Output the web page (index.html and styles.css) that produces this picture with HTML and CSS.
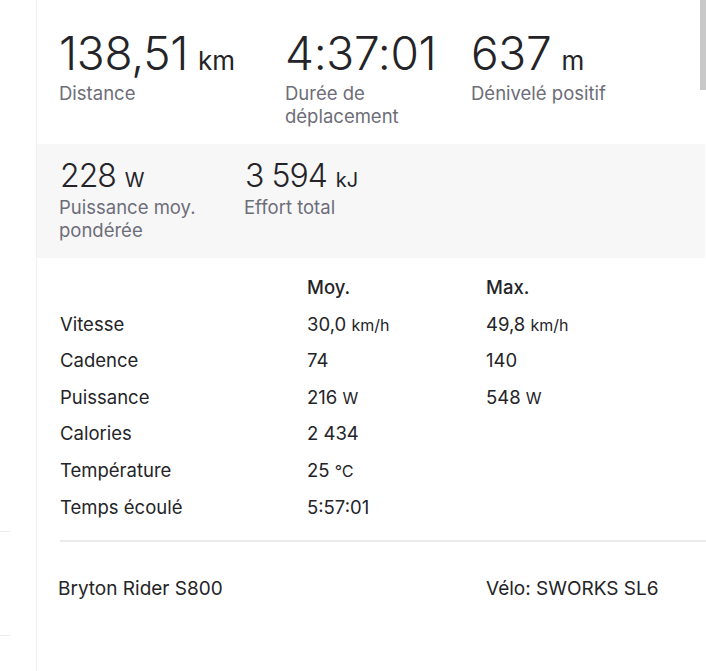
FILE: index.html
```html
<!DOCTYPE html>
<html lang="fr">
<head>
<meta charset="utf-8">
<title>Activité</title>
<link rel="stylesheet" href="styles.css">
</head>
<body>
<div class="page">
  <aside class="side">
    <span class="tick tick-a"></span>
    <span class="tick tick-b"></span>
  </aside>
  <main class="main">
    <section class="stats primary">
      <div class="stat s1">
        <div class="val">138,51<span class="unit">km</span></div>
        <div class="lbl">Distance</div>
      </div>
      <div class="stat s2">
        <div class="val">4:37:01</div>
        <div class="lbl">Durée de déplacement</div>
      </div>
      <div class="stat s3">
        <div class="val">637<span class="unit">m</span></div>
        <div class="lbl">Dénivelé positif</div>
      </div>
    </section>
    <section class="stats secondary">
      <div class="stat t1">
        <div class="val">228<span class="unit">W</span></div>
        <div class="lbl">Puissance moy. pondérée</div>
      </div>
      <div class="stat t2">
        <div class="val">3 594<span class="unit">kJ</span></div>
        <div class="lbl">Effort total</div>
      </div>
    </section>
    <section class="table">
      <div class="cell head"></div><div class="cell head">Moy.</div><div class="cell head">Max.</div>
      <div class="cell">Vitesse</div><div class="cell">30,0 <span class="u">km/h</span></div><div class="cell">49,8 <span class="u">km/h</span></div>
      <div class="cell">Cadence</div><div class="cell">74</div><div class="cell">140</div>
      <div class="cell">Puissance</div><div class="cell">216 <span class="u">W</span></div><div class="cell">548 <span class="u">W</span></div>
      <div class="cell">Calories</div><div class="cell">2 434</div><div class="cell"></div>
      <div class="cell">Température</div><div class="cell">25 <span class="u">℃</span></div><div class="cell"></div>
      <div class="cell">Temps écoulé</div><div class="cell">5:57:01</div><div class="cell"></div>
    </section>
    <hr class="divider">
    <section class="device">
      <div class="dev">Bryton Rider S800</div>
      <div class="bike">Vélo: SWORKS SL6</div>
    </section>
  </main>
  <div class="scroll-thumb"></div>
</div>
</body>
</html>
```
FILE: styles.css
```css
* { box-sizing: border-box; }
html, body { margin: 0; padding: 0; background: #fff; }
body {
  font-family: "Inter", "Noto Sans", sans-serif;
  color: #242428;
  width: 706px;
  height: 671px;
  overflow: hidden;
}
.page {
  position: relative;
  display: flex;
  height: 671px;
}
.side {
  position: relative;
  width: 37px;
  flex: none;
  border-right: 1px solid #efeff0;
}
.tick {
  position: absolute;
  left: 0;
  width: 10px;
  height: 1px;
  background: #ececec;
}
.tick-a { top: 531px; }
.tick-b { top: 635px; }
.main {
  flex: 1;
  min-width: 0;
}
.stats {
  display: flex;
  padding-left: 22px;
}
.primary {
  padding-top: 25px;
  height: 144px;
}
.secondary {
  background: #f7f7f8;
  height: 114px;
  padding-top: 11px;
  margin-right: 1px;
}
.stat .val {
  font-weight: 300;
  white-space: nowrap;
}
.primary .val { font-size: 46px; line-height: 57px; letter-spacing: -0.3px; }
.secondary .val { font-size: 32px; line-height: 41px; padding-left: 1px; letter-spacing: -1px; }
.unit { font-size: 26px; line-height: 1; font-weight: 400; margin-left: 10px; letter-spacing: 0; }
.secondary .unit { font-size: 20px; margin-left: 9px; }
.lbl {
  color: #6d6d78;
  font-size: 18.5px;
  line-height: 23px;
}
.s1 { width: 226px; }
.s2 { width: 186px; padding-right: 26px; }
.t1 { width: 185px; padding-right: 25px; }
.table {
  display: grid;
  grid-template-columns: 247px 179px 1fr;
  padding: 11px 0 0 23px;
  font-size: 18.5px;
}
.cell {
  height: 36.6px;
  line-height: 36.6px;
  white-space: nowrap;
}
.head { font-weight: 500; }
.u { font-size: 16px; }
.divider {
  border: 0;
  height: 2px;
  background: #ebebeb;
  margin: 15px 0 0 23px;
}
.device {
  display: flex;
  padding: 35px 0 0 21px;
  font-size: 19px;
}
.dev { width: 428px; }
.scroll-thumb {
  position: absolute;
  right: 0;
  top: 0;
  width: 6px;
  height: 90px;
  background: #c9c9c9;
}
```
